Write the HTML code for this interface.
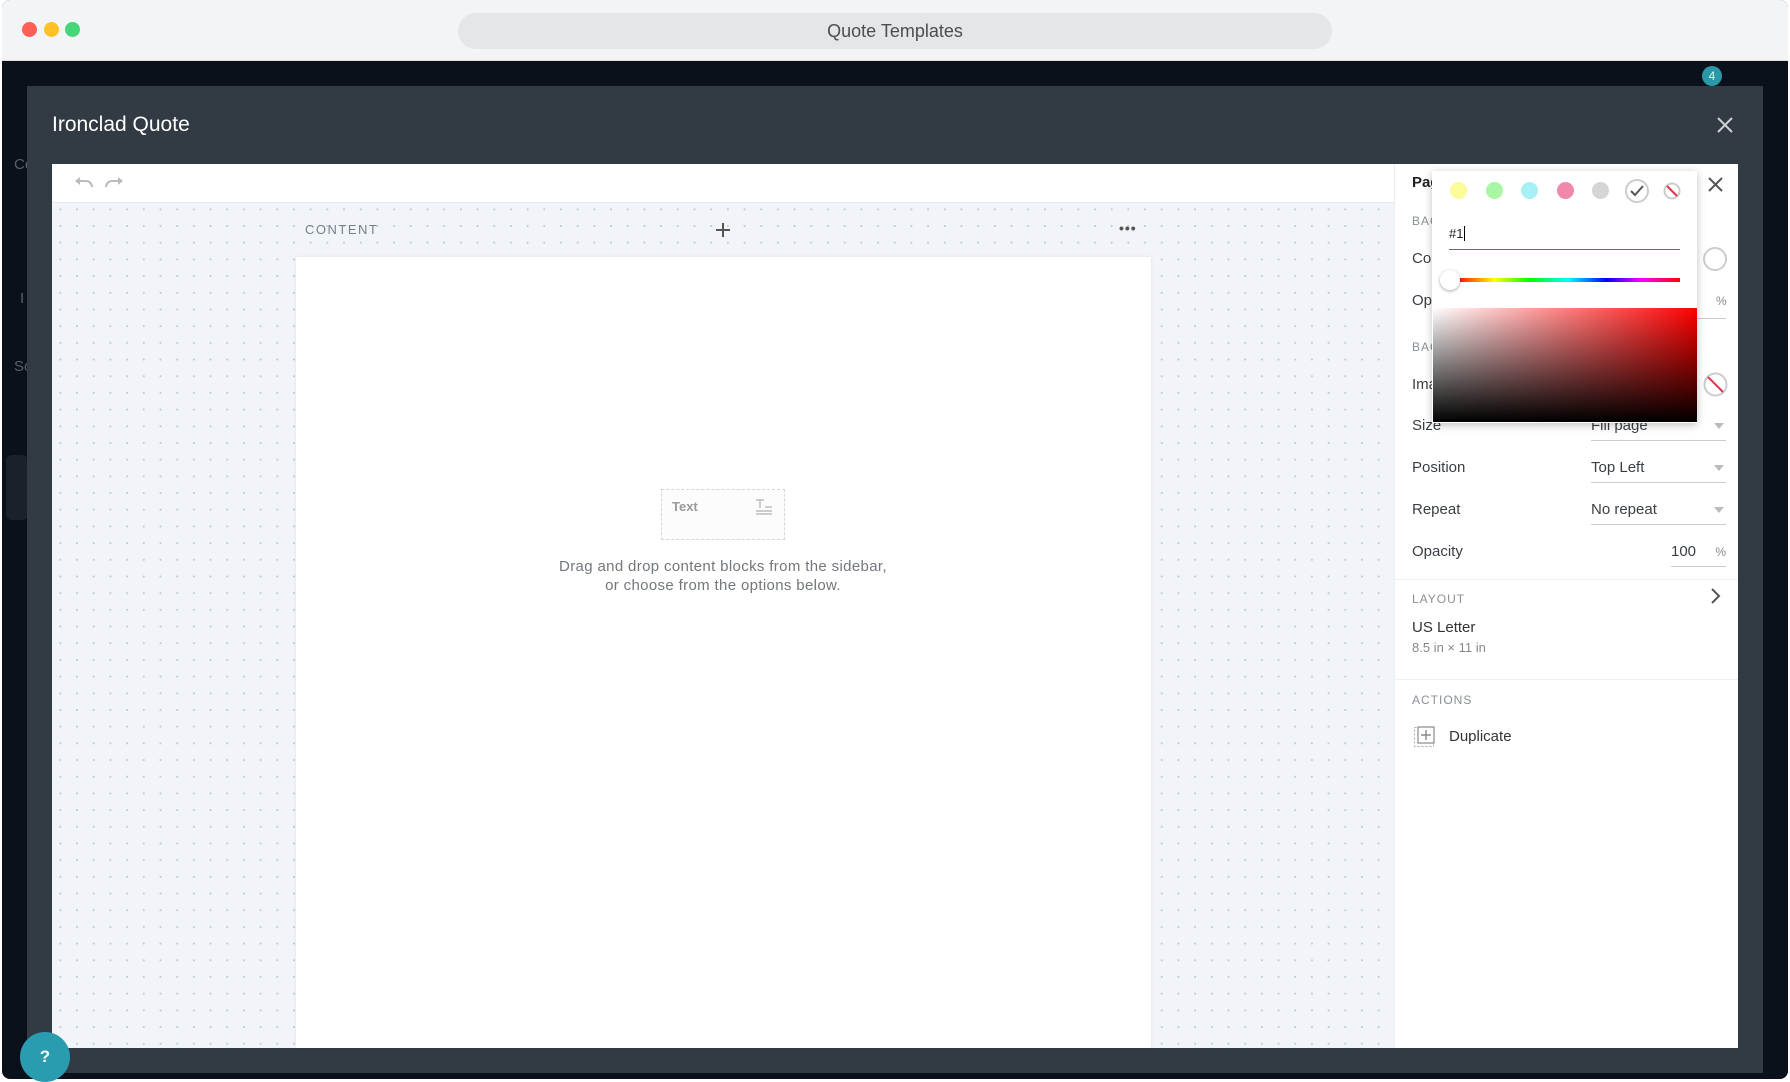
<!DOCTYPE html>
<html><head><meta charset="utf-8"><style>
*{box-sizing:border-box;margin:0;padding:0}
body{width:1790px;height:1080px;overflow:hidden;background:#fff;font-family:"Liberation Sans",sans-serif;position:relative}
.a{position:absolute}
.lbl{position:absolute;left:1412px;font-size:15px;color:#3a3f45}
.sec{position:absolute;left:1412px;font-size:12px;letter-spacing:1px;color:#8a9097}
.val{position:absolute;left:1591px;width:135px;font-size:15px;color:#3a3f45;border-bottom:1px solid #ccc;padding-bottom:6px}
.arr{position:absolute;right:2px;top:6px;width:0;height:0;border-left:5px solid transparent;border-right:5px solid transparent;border-top:6px solid #bbb}
.sw{position:absolute;top:182px;width:17px;height:17px;border-radius:50%}
</style></head><body>
<div class="a" style="left:2px;top:0;width:1786px;height:1079px;border-radius:8px;background:#0b111a;overflow:hidden">
 <div class="a" style="left:0;top:0;width:1786px;height:61px;background:#f3f4f5;border-bottom:1px solid #ddd"></div>
 <div class="a" style="left:20px;top:22px;width:15px;height:15px;border-radius:50%;background:#fe6058"></div>
 <div class="a" style="left:42px;top:22px;width:15px;height:15px;border-radius:50%;background:#fdc228"></div>
 <div class="a" style="left:63px;top:22px;width:15px;height:15px;border-radius:50%;background:#45d67a"></div>
 <div class="a" style="left:456px;top:13px;width:874px;height:36px;border-radius:18px;background:#e5e6e8;text-align:center;line-height:36px;font-size:18px;color:#4a4d52">Quote Templates</div>
 <div class="a" style="left:12px;top:156px;font-size:15px;color:#5a6068">Co</div>
 <div class="a" style="left:18px;top:290px;font-size:15px;color:#5a6068">I</div>
 <div class="a" style="left:12px;top:358px;font-size:15px;color:#5a6068">So</div>
 <div class="a" style="left:4px;top:455px;width:22px;height:65px;border-radius:6px;background:#1a212a"></div>
 <div class="a" style="left:1700px;top:66px;width:20px;height:20px;border-radius:50%;background:#2a98a8;color:#cfe;font-size:12px;text-align:center;line-height:20px">4</div>
</div>
<div class="a" style="left:27px;top:86px;width:1736px;height:987px;background:#323a43"></div>
<div class="a" style="left:52px;top:113px;font-size:21px;color:#fff;font-weight:normal">Ironclad Quote</div>
<svg class="a" style="left:1716px;top:116px" width="18" height="18" viewBox="0 0 18 18"><path d="M2 2L16 16M16 2L2 16" stroke="#cfd3d7" stroke-width="2"/></svg>
<div class="a" style="left:52px;top:164px;width:1686px;height:884px;background:#fff"></div>
<div class="a" style="left:52px;top:202px;width:1342px;height:846px;background-color:#f1f4f8;background-image:radial-gradient(circle,#c3c9d0 0.8px,transparent 1.2px);background-size:16.7px 16.7px;background-position:0 -2px;border-top:1px solid #e6e9ed"></div>
<svg class="a" style="left:74px;top:175px" width="50" height="16" viewBox="0 0 50 16"><path d="M3 6h9a6 6 0 0 1 6 6" stroke="#bbb" stroke-width="2" fill="none"/><path d="M1 6l5-4v8z" fill="#bbb"/><path d="M47 6h-9a6 6 0 0 0-6 6" stroke="#bbb" stroke-width="2" fill="none"/><path d="M49 6l-5-4v8z" fill="#bbb"/></svg>
<div class="a" style="left:305px;top:222px;font-size:13px;letter-spacing:1.5px;color:#7a8088">CONTENT</div>
<svg class="a" style="left:715px;top:222px" width="16" height="16"><path d="M8 1v14M1 8h14" stroke="#555" stroke-width="2"/></svg>
<div class="a" style="left:1119px;top:220px;font-size:14px;color:#555;font-weight:bold;letter-spacing:1px">•••</div>
<div class="a" style="left:296px;top:257px;width:855px;height:791px;background:#fff;box-shadow:0 0 3px rgba(0,0,0,.08)"></div>
<div class="a" style="left:661px;top:489px;width:124px;height:51px;border:1px dashed #d6d6d6;background:#fcfcfc"></div>
<div class="a" style="left:672px;top:499px;font-size:13px;font-weight:bold;color:#9a9a9a">Text</div>
<svg class="a" style="left:755px;top:498px" width="18" height="18"><path d="M1 2h8M5 2v8M10 9h7M1 13h16M1 16h16" stroke="#bbb" stroke-width="1.5"/></svg>
<div class="a" style="left:476px;top:557px;width:494px;text-align:center;font-size:15px;line-height:19px;letter-spacing:0.35px;color:#72777d">Drag and drop content blocks from the sidebar,<br>or choose from the options below.</div>
<div class="a" style="left:1394px;top:164px;width:1px;height:884px;background:#eceef0"></div>
<div class="a" style="left:1412px;top:174px;font-size:15px;font-weight:bold;color:#222">Page</div>
<svg class="a" style="left:1708px;top:177px" width="15" height="15"><path d="M1 1L14 14M14 1L1 14" stroke="#555" stroke-width="2"/></svg>
<div class="sec" style="top:214px">BACKGROUND</div>
<div class="lbl" style="top:250px">Color</div>
<div class="a" style="left:1703px;top:247px;width:24px;height:24px;border-radius:50%;border:2px solid #ccc"></div>
<div class="lbl" style="top:292px">Opacity</div>
<div class="a" style="left:1716px;top:294px;font-size:12px;color:#888">%</div>
<div class="a" style="left:1591px;top:318px;width:135px;height:1px;background:#ccc"></div>
<div class="sec" style="top:340px">BACKGROUND IMAGE</div>
<div class="lbl" style="top:376px">Image</div>
<svg class="a" style="left:1703px;top:372px" width="25" height="25"><circle cx="12.5" cy="12.5" r="11" stroke="#ccc" stroke-width="2" fill="none"/><path d="M5 5L20 20" stroke="#e0344f" stroke-width="2"/></svg>
<div class="lbl" style="top:417px">Size</div>
<div class="val" style="top:417px">Fill page<span class="arr"></span></div>
<div class="lbl" style="top:459px">Position</div>
<div class="val" style="top:459px">Top Left<span class="arr"></span></div>
<div class="lbl" style="top:501px">Repeat</div>
<div class="val" style="top:501px">No repeat<span class="arr"></span></div>
<div class="lbl" style="top:543px">Opacity</div>
<div class="a" style="left:1671px;top:543px;width:55px;font-size:15px;color:#3a3f45;border-bottom:1px solid #ccc;padding-bottom:6px">100 <span style="float:right;font-size:12px;color:#888;margin-top:2px">%</span></div>
<div class="a" style="left:1394px;top:579px;width:344px;height:1px;background:#eef0f2"></div>
<div class="sec" style="top:592px">LAYOUT</div>
<svg class="a" style="left:1710px;top:587px" width="12" height="18"><path d="M2 2l7 7-7 7" stroke="#555" stroke-width="2" fill="none"/></svg>
<div class="lbl" style="top:619px;color:#333">US Letter</div>
<div class="lbl" style="top:640px;font-size:13px;color:#888">8.5 in × 11 in</div>
<div class="a" style="left:1394px;top:679px;width:344px;height:1px;background:#eef0f2"></div>
<div class="sec" style="top:693px">ACTIONS</div>
<svg class="a" style="left:1413px;top:726px" width="22" height="22"><rect x="1.5" y="1.5" width="19" height="19" fill="none" stroke="#aaa" stroke-dasharray="2 2"/><rect x="5" y="1" width="16" height="16" fill="#fff" stroke="#888" stroke-width="1.2"/><path d="M13 4v10M8 9h10" stroke="#888" stroke-width="1.4"/></svg>
<div class="a" style="left:1449px;top:728px;font-size:15px;color:#333">Duplicate</div>
<div class="a" style="left:1432px;top:171px;width:265px;height:252px;background:#fff;box-shadow:0 2px 8px rgba(0,0,0,.25)"></div>
<div class="sw" style="left:1450px;background:#fbfb9a"></div>
<div class="sw" style="left:1486px;background:#a9f7a4"></div>
<div class="sw" style="left:1521px;background:#a7f1f6"></div>
<div class="sw" style="left:1557px;background:#ef88aa"></div>
<div class="sw" style="left:1592px;background:#d5d5d5"></div>
<div class="a" style="left:1625px;top:179px;width:24px;height:24px;border-radius:50%;border:2.5px solid #ccc"></div>
<svg class="a" style="left:1630px;top:185px" width="14" height="12"><path d="M1 6l4 4 8-9" stroke="#555" stroke-width="2" fill="none"/></svg>
<svg class="a" style="left:1663px;top:182px" width="18" height="18"><circle cx="9" cy="9" r="7.5" stroke="#ccc" stroke-width="2" fill="none"/><path d="M4 4L14 14" stroke="#e0344f" stroke-width="2"/></svg>
<div class="a" style="left:1449px;top:226px;font-size:13px;color:#222">#1<span style="border-left:1px solid #000;margin-left:1px"></span></div>
<div class="a" style="left:1449px;top:249px;width:231px;height:1px;background:#2e8a7a"></div>
<div class="a" style="left:1456px;top:278px;width:224px;height:4px;background:linear-gradient(90deg,#f00,#ff0 17%,#0f0 33%,#0ff 50%,#00f 67%,#f0f 83%,#f00)"></div>
<div class="a" style="left:1440px;top:270px;width:20px;height:20px;border-radius:50%;background:#fff;box-shadow:0 1px 3px rgba(0,0,0,.35)"></div>
<div class="a" style="left:1433px;top:308px;width:264px;height:114px;background:linear-gradient(to bottom,transparent,#000),linear-gradient(to right,#fff,#f00)"></div>
<div class="a" style="left:20px;top:1032px;width:50px;height:50px;border-radius:50%;background:#2a9cb0;color:#fff;font-weight:bold;font-size:17px;text-align:center;line-height:50px">?</div>
</body></html>
